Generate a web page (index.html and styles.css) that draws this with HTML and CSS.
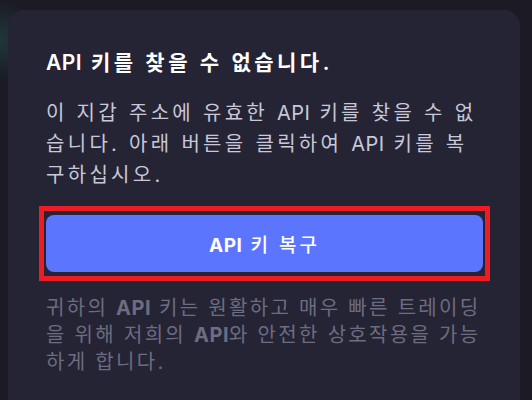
FILE: index.html
```html
<!DOCTYPE html>
<html lang="ko">
<head>
    <meta charset="UTF-8">
    <meta name="viewport" content="width=device-width, initial-scale=1.0">
    <title>API 키 복구</title>
    <link rel="stylesheet" href="styles.css">
</head>
<body>

    <div class="card">
        <h2 class="title"><span class="latin">API</span> 키를 찾을 수 없습니다.</h2>
        <p class="desc">이 지갑 주소에 유효한 <span class="latin">API</span> 키를 찾을 수 없습니다. 아래 버튼을 클릭하여 <span class="latin">API</span> 키를 복구하십시오.</p>

        <div class="highlight">
            <button type="button" class="restore-btn"><span class="latin">API</span> 키 복구</button>
        </div>

        <p class="note">귀하의 <strong class="latin">API</strong> 키는 원활하고 매우 빠른 트레이딩을 위해 저희의 <strong class="latin">API</strong>와 안전한 상호작용을 가능하게 합니다.</p>
    </div>

</body>
</html>
```

FILE: styles.css
```css
html, body {
    height: 100%;
}
body {
    margin: 0;
    padding: 10px 12px 0 8px;
    box-sizing: border-box;
    font-family: Inter, "Noto Sans CJK KR", sans-serif;
    background-color: #1b1a25;
    background-image: radial-gradient(circle at 0 40px, rgba(40, 110, 95, 0.35), transparent 40px);
    overflow: hidden;
}
.card {
    background-color: #252435;
    border-radius: 16px 16px 0 0;
    padding: 38px 37px 30px 38px;
    height: 100%;
    box-sizing: border-box;
}
.latin {
    letter-spacing: 0.5px;
}
.title {
    margin: 0;
    font-size: 21px;
    font-weight: 600;
    line-height: 30px;
    letter-spacing: 3.5px;
    color: #ffffff;
}
.desc {
    margin: 20px 0 0;
    font-size: 20px;
    line-height: 31px;
    letter-spacing: 3.3px;
    color: #c8c8d8;
}
.highlight {
    margin: 15px -7px 0;
    border: 5px solid #ed1c24;
    padding: 4px 2px;
}
.restore-btn {
    display: block;
    width: 100%;
    height: 57px;
    border: none;
    border-radius: 8px;
    background-color: #5c75ff;
    color: #ffffff;
    font-family: inherit;
    font-size: 19px;
    font-weight: 500;
    letter-spacing: 3px;
    cursor: pointer;
}
.restore-btn .latin {
    font-weight: 700;
}
.note {
    margin: 14px 0 0;
    font-size: 20px;
    line-height: 27px;
    letter-spacing: 2.3px;
    color: #6d6c80;
}
.note strong {
    font-weight: 700;
}
```
